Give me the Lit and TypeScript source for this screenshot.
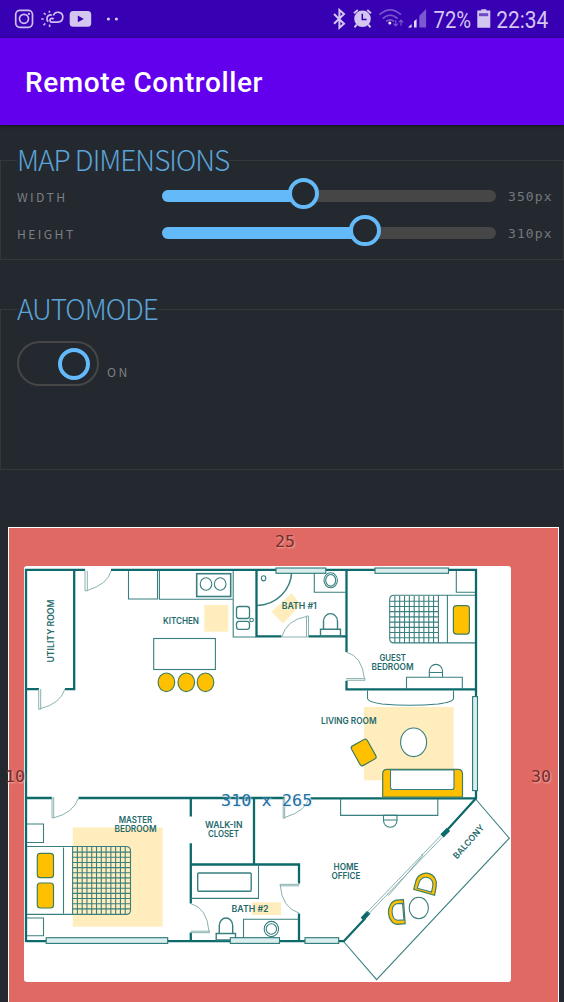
import { LitElement, html, css, svg } from "lit";
import { customElement, property } from "lit/decorators.js";

@customElement("status-bar")
class StatusBar extends LitElement {
  static styles = css`
    :host { display: flex; justify-content: space-between; height: 37.5px; background: #3700b3; }
    svg { display: block; height: 37px; }
    text { font-family: Roboto, sans-serif; font-size: 23.5px; fill: #d3c6f0; }
  `;
  render() {
    return html`
      <svg width="130" viewBox="0 0 130 37" fill="none" stroke="#cdbfee" stroke-width="1.7">
        <rect x="15.7" y="10.3" width="16.8" height="17" rx="4.2" />
        <circle cx="24" cy="18.8" r="4.5" />
        <circle cx="28.9" cy="13.9" r="1.1" fill="#cdbfee" stroke="none" />
        <path d="M53.6 19.2a2 2 0 1 0-2.6 2.9H58a4.9 4.9 0 1 0-4.7-6.6M48.2 21.6a4 4 0 0 1 .3-6.1q1.8-1 3.4-.2" />
        <path d="M41.3 19h2.4M43.8 13l1.8 1.7M49.4 10.8v2M43.5 25.2l1.8-1.8M49.6 24.5v2.5" stroke-width="1.6" />
        <rect x="69.7" y="11" width="21.5" height="15.8" rx="3.5" fill="#d3c6f0" stroke="none" />
        <path d="M77.8 15.5v6.8l6-3.4z" fill="#3700b3" stroke="none" />
        <circle cx="108.4" cy="19" r="1.6" fill="#d3c6f0" stroke="none" />
        <circle cx="116.4" cy="19" r="1.6" fill="#d3c6f0" stroke="none" />
      </svg>
      <svg width="244" viewBox="320 0 244 37" fill="none">
        <path d="M334 14l10 9.8-4.6 4V10l4.6 4-10 9.8" stroke="#d3c6f0" stroke-width="2" />
        <circle cx="362.5" cy="18.8" r="8.3" fill="#d3c6f0" />
        <path d="M354 13.3l3.8-3.2M371 13.3l-3.8-3.2M356.7 24.6l-2.2 2.7M368.3 24.6l2.2 2.7" stroke="#d3c6f0" stroke-width="2" />
        <path d="M362.3 13.8v5.7h4.3" stroke="#3700b3" stroke-width="1.5" />
        <g stroke="#7857cd" stroke-width="1.7">
          <path d="M379.5 14.7q10.7-9.8 21.4 0M382.8 18.5q7.4-6.7 14.8 0M386.2 21.5q3.9-3.3 7.8 0" />
          <path d="M395.7 20.2v5.5M393.5 23.7l2.2 2.3 2.2-2.3M401 25.8v-5.3M398.8 22.4l2.2-2.3 2.2 2.3" stroke-width="1.2" />
        </g>
        <circle cx="389.8" cy="23" r="1.5" fill="#eee7fb" />
        <path d="M408 27.5l3.6-3.4v3.4zM414 27.5v-6.3l2.6-2.2v8.5z" fill="#e2d9f7" />
        <path d="M419.3 27.5V15.8l6.8-6.8v18.5z" fill="#7b59cf" />
        <text x="433.6" y="27.6" textLength="37.5" lengthAdjust="spacingAndGlyphs">72%</text>
        <path d="M477.3 10.6h4v-1.4h5v1.4h4v17.2h-13z" fill="#d3c6f0" />
        <rect x="479" y="13.2" width="9.2" height="3" fill="#6d49c6" />
        <text x="496.2" y="27.6" textLength="52" lengthAdjust="spacingAndGlyphs">22:34</text>
      </svg>`;
  }
}

@customElement("range-row")
class RangeRow extends LitElement {
  @property() label = "";
  @property() value = "";
  @property({ type: Number }) percent = 0;
  static styles = css`
    :host { display: grid; grid-template-columns: 145px 334px 1fr; height: 37px; align-items: center; }
    .label { font: 12.2px "Noto Sans CJK JP", "Open Sans", sans-serif; letter-spacing: 2.4px; color: #7b7f85; line-height: 20px; }
    .value { font: 13px "DejaVu Sans Mono", monospace; letter-spacing: 1.1px; color: #74787e; padding-left: 12px; white-space: nowrap; }
    .track { height: 11.5px; border-radius: 6px; background: #464646; display: flex; align-items: center; margin-bottom: 1px; }
    .fill { height: 100%; border-radius: 6px 0 0 6px; background: #64baf9; }
    .thumb { flex: none; box-sizing: border-box; width: 31.5px; height: 31.5px; margin: -5px 0 0 -16px; border: 4.5px solid #64baf9; border-radius: 50%; background: #24292f; }
  `;
  render() {
    return html`<span class="label">${this.label}</span>
      <div class="track"><div class="fill" style="width:${this.percent}%"></div><div class="thumb"></div></div>
      <span class="value">${this.value}</span>`;
  }
}

type Label = [string, number, number, number, string?];
const labels: Label[] = [
  ["KITCHEN", 163, 624, 36],
  ["BATH #1", 281.7, 608.6, 35],
  ["GUEST", 379.5, 661, 26.5],
  ["BEDROOM", 371.5, 670, 42],
  ["LIVING ROOM", 321, 723.7, 55.5],
  ["MASTER", 118.7, 823.3, 33.5],
  ["BEDROOM", 114.5, 832, 42],
  ["WALK-IN", 205, 827.5, 37.5],
  ["CLOSET", 208, 836.5, 31],
  ["HOME", 333.5, 870, 25],
  ["OFFICE", 331.5, 879, 29],
  ["BATH #2", 231.5, 912, 37],
  ["UTILITY ROOM", 53.6, 662.5, 63, "rotate(-90 53.6 662.5)"],
  ["BALCONY", 457, 859.5, 42, "rotate(-48.5 457 859.5)"],
];

@customElement("floor-plan")
class FloorPlan extends LitElement {
  static styles = css`
    :host { display: block; }
    svg { display: block; width: 487px; height: 416px; background: #fff; border-radius: 3px; }
    .thin { fill: none; stroke: #397f7f; stroke-width: 1.1; }
    .wall { fill: none; stroke: #0e6a6a; stroke-width: 2.3; }
    .door { fill: none; stroke: #7ba9a8; stroke-width: 0.9; }
    .rug { fill: #ffedbd; }
    .gold { fill: #ffc000; stroke: #437e5c; stroke-width: 1.2; }
    .window { fill: #d9eeed; stroke: #297777; stroke-width: 1.1; }
    .white { fill: #fff; stroke: #397f7f; stroke-width: 1.1; }
    text { font: 600 8.8px Inter, sans-serif; fill: #24696b; }
  `;
  grid(x: number, y: number, w: number, h: number, cols: number, rows: number) {
    let d = "";
    for (let i = 1; i < cols; i++) d += `M${x + (w * i) / cols} ${y}v${h}`;
    for (let i = 1; i < rows; i++) d += `M${x} ${y + (h * i) / rows}h${w}`;
    return svg`<path class="thin" d=${d} />`;
  }
  render() {
    return html`<svg viewBox="24 566 487 416">
      <g class="rug">
        <rect x="204.3" y="605" width="24" height="26.7" />
        <path d="M271.5 611.7l20.3-18.5 8.8 11.5-17.5 18.8z" />
        <rect x="364" y="707" width="89.6" height="73.3" />
        <rect x="72.7" y="827.5" width="90" height="99.2" />
        <rect x="252" y="902.3" width="29" height="12.7" />
      </g>
      <g class="wall">
        <path d="M26 942V569.8H85M111 569.8H476V798.3H310.5M74.2 570V689.2H65M26 689.2H39" />
        <path d="M256.5 570V636.3H281.5M308.5 636.3H346.5M346.5 570V652M346.5 681V689.3H476" />
        <path d="M26 798H52M78.5 798H284.5M190.8 798V816.5M190.8 843.3V903.5M190.8 932.5V941.2M254 798V864.5M190.8 864.5H299V883.5M299 913.5V941M26 941.2H343.8L365 918.5M476 798.3L443.5 834" />
        <path d="M442 835.8l6.5-6.5M362.3 919.3l6.5-7" stroke-width="4.6" />
      </g>
      <g class="thin">
        <path d="M128.5 571V599H157.5V571M159.4 571V599.3H232.5M233.2 571V637H256M318 571.5h-3.7v20.8H346M456.3 571v21.3H475" />
        <path d="M257 605.5A35 35 0 0 0 291.7 571" stroke-width="1.5" />
        <ellipse cx="263.6" cy="578.3" rx="2.2" ry="2.6" />
        <rect x="196.7" y="573.7" width="34" height="22.8" stroke-width="1.6" />
        <ellipse cx="206" cy="584" rx="5.8" ry="6.3" /><ellipse cx="220.2" cy="584" rx="5.8" ry="6.3" />
        <rect x="236.5" y="606.5" width="13" height="12" rx="2.5" stroke-width="1.3" />
        <rect x="236.5" y="621.3" width="13" height="8" rx="2.5" stroke-width="1.3" />
        <circle cx="251.6" cy="620" r="1.8" />
        <ellipse cx="330.7" cy="580.3" rx="6.7" ry="7.5" /><ellipse cx="330.7" cy="580.3" rx="5" ry="5.8" />
        <path d="M323.5 629.3v-8a7 7.7 0 0 1 14 0v8M320.5 629.3h20v6.7h-20z" stroke-width="1.4" />
        <rect x="153.7" y="638.5" width="61.7" height="31" />
        <path d="M438.4 595.3H394q-4.3 0-4.3 4.3V638.5q0 4.4 4.3 4.4H475M438.4 595.3V642.9M447.4 595.3V642.9M438.4 595.3H475" />
        <path d="M406.5 689V677.3H462.3V689M429.3 677v-6a6.6 6.6 0 0 1 13.2 0v6M429.3 672.5h13.2" />
        <path d="M367.5 690.5v8Q367.8 702 382 704q28 2.6 56 0 15.2-2 15.5-5.5v-8" />
        <path d="M340.6 799V815.4H437.8V799M383.5 815v5.5a6.7 6.7 0 0 0 13.5 0V815zM383.5 820h13.5" />
        <path d="M27 824h16.5v18.5H27M27 918h16.5v17.8H27" />
        <path d="M27 846.5H126q4.5 0 4.5 4.5V910q0 4.4-4.5 4.4H27M63.5 847.5v66M72.6 846.5v68" />
        <path d="M191 898.4h67.5V865M243.5 940v-20.8H298" />
        <rect x="197.7" y="873" width="53.5" height="18.3" rx="1" stroke-width="1.4" />
        <ellipse cx="271.4" cy="929" rx="7.2" ry="7.6" /><circle cx="271.4" cy="929" r="5.2" />
        <path d="M219.3 933.5v-8a6.7 7.5 0 0 1 13.4 0v8M216.2 933.5h19.3v6.5h-19.3z" stroke-width="1.4" />
        <path d="M476.4 800L509.3 838.2 376.6 979.7 344 942" />
      </g>
      ${this.grid(390, 596, 48.4, 47, 10, 9)}
      ${this.grid(72.6, 847, 57.4, 67, 12, 13)}
      <g class="door">
        <path d="M442.3 837.3L368.5 914M440.7 835.7L367 912.3M421.3 854.2l1.6 1.4L388.6 895.3 387 893.9" />
        <path d="M85 570v20.8h2.3V571M87.3 590.5Q108 584 111 571" />
        <path d="M38.7 689v20.2h2V689M40.7 708.5Q60 704 65 689" />
        <path d="M308.5 637v-21h-2v21M306.5 616.5Q286.5 620 281.7 637H308" />
        <path d="M346 680.3h19v-1.7h-19M364.5 678.6Q362 656 346 652" />
        <path d="M52 797v20.8h1.7V797M53.7 817.8Q73.5 813 78.5 798" />
        <path d="M283.2 798v20.2h1.5V798M284.7 817.5Q306 811 309 798" />
        <path d="M299.5 884.3h-19.3v1.5H299M280.2 885Q282 908 299 913" />
        <path d="M191 932.7h18.5v-1.5H191M209 931.2Q207 908 191 903.7" />
      </g>
      <g class="gold">
        <ellipse cx="166.4" cy="682.3" rx="8.3" ry="9.3" /><ellipse cx="186.3" cy="682.3" rx="8.3" ry="9.3" /><ellipse cx="205.5" cy="682.3" rx="8.3" ry="9.3" />
        <rect x="453.4" y="605.7" width="16" height="28.4" rx="3" />
        <rect x="354.7" y="741.3" width="18" height="22.3" rx="2.5" transform="rotate(-29 363.7 752.5)" />
        <path d="M382.7 797V774q0-4.6 4.6-4.6h70.6q4.6 0 4.6 4.6V797z" />
        <rect x="37.3" y="853.3" width="16.2" height="24.4" rx="3" /><rect x="37.3" y="883" width="16.2" height="25" rx="3" />
        <path d="M413.7 889.3l2.1-8a10.4 10.6 0 0 1 20.4 5l-1.6 9z" />
        <path d="M403.4 899.7l-7.4.5a9.2 12.2 0 0 0 1.5 24.2l7.7-.8z" />
      </g>
      <g class="white">
        <path d="M390.5 770V787.5q0 2 2 2h59.5q2 0 2-2V770z" />
        <ellipse cx="413.6" cy="742.3" rx="13" ry="14.3" />
        <path d="M417.3 888.2l1.8-5.6a7 7 0 0 1 13.7 3.4l-1.3 6z" />
        <path d="M402.6 903.4l-6.2.3a6 8.5 0 0 0 1.1 16.6l6.4-.4z" />
        <ellipse cx="418.8" cy="908" rx="9.6" ry="10.7" />
      </g>
      <g class="window">
        <rect x="276" y="568" width="49.8" height="5.3" /><rect x="375" y="568" width="73.5" height="5.3" />
        <rect x="472.6" y="696.6" width="4.9" height="94" />
        <rect x="46.2" y="937.7" width="121.5" height="5.7" /><rect x="230.3" y="937.7" width="49.2" height="5.7" /><rect x="305" y="937.7" width="33.7" height="5.7" />
      </g>
      ${labels.map(([t, x, y, w, tr]) => svg`<text x=${x} y=${y} textLength=${w} lengthAdjust="spacingAndGlyphs" transform=${tr ?? ""}>${t}</text>`)}
    </svg>`;
  }
}

@customElement("app-root")
class AppRoot extends LitElement {
  static styles = css`
    :host { display: block; width: 564px; height: 1002px; overflow: hidden; background: #24292f; font-family: "Noto Sans CJK JP", "Open Sans", sans-serif; }
    .bar { height: 87.5px; box-sizing: border-box; background: #6200ee; color: #fff; padding: 3px 25px 0; display: flex; align-items: center; font: 500 28px Roboto, sans-serif; letter-spacing: 0.6px; box-shadow: 0 1px 3px #14171b; }
    fieldset { box-sizing: border-box; margin: 0 0 31px; padding: 0 0 0 16px; border: 1.5px solid #35383a; min-width: 0; }
    .dims { height: 118px; margin-top: 17px; }
    .auto { height: 179px; margin-bottom: 57px; }
    legend { height: 36px; line-height: 34px; padding: 0; font-size: 28px; font-weight: 300; letter-spacing: -1px; color: #5ba3d8; white-space: nowrap; }
    .row { display: flex; gap: 8px; padding-top: 14px; }
    .toggle { box-sizing: border-box; width: 82px; height: 45px; border: 2px solid #464646; border-radius: 23px; display: flex; justify-content: flex-end; align-items: center; padding-right: 7px; }
    .knob { box-sizing: border-box; width: 32px; height: 32px; border: 4.5px solid #64baf9; border-radius: 50%; }
    .on { font-size: 12.2px; letter-spacing: 2.4px; color: #7b7f85; line-height: 20px; padding-top: 20.5px; }
    .map { position: relative; box-sizing: border-box; width: 551px; height: 510px; margin-left: 8px; padding: 38px 0 0 15px; border: 1px solid #fff; background: #e06963; }
    .tag { position: absolute; font: 16.7px/20px "DejaVu Sans Mono", monospace; color: #742d2b; text-shadow: 1px 1px 2px #f2b0a8; white-space: pre; }
    .top { left: 266px; top: 3px; }
    .left { left: -4px; top: 238px; }
    .right { left: 522px; top: 238px; }
    .bottom { left: 266px; top: 470px; }
    .size { left: 212px; top: 262px; color: #2470a4; letter-spacing: 0.1px; text-shadow: 1px 1px 2px #d6e7f1; }
  `;
  render() {
    return html`
      <status-bar></status-bar>
      <header class="bar">Remote Controller</header>
      <fieldset class="dims">
        <legend>MAP DIMENSIONS</legend>
        <range-row label="WIDTH" value="350px" percent="42.4"></range-row>
        <range-row label="HEIGHT" value="310px" percent="60.8"></range-row>
      </fieldset>
      <fieldset class="auto">
        <legend>AUTOMODE</legend>
        <div class="row"><div class="toggle"><div class="knob"></div></div><span class="on">ON</span></div>
      </fieldset>
      <div class="map">
        <floor-plan></floor-plan>
        <span class="tag top">25</span><span class="tag left">10</span><span class="tag right">30</span>
        <span class="tag bottom">20</span><span class="tag size">310 x 265</span>
      </div>`;
  }
}
